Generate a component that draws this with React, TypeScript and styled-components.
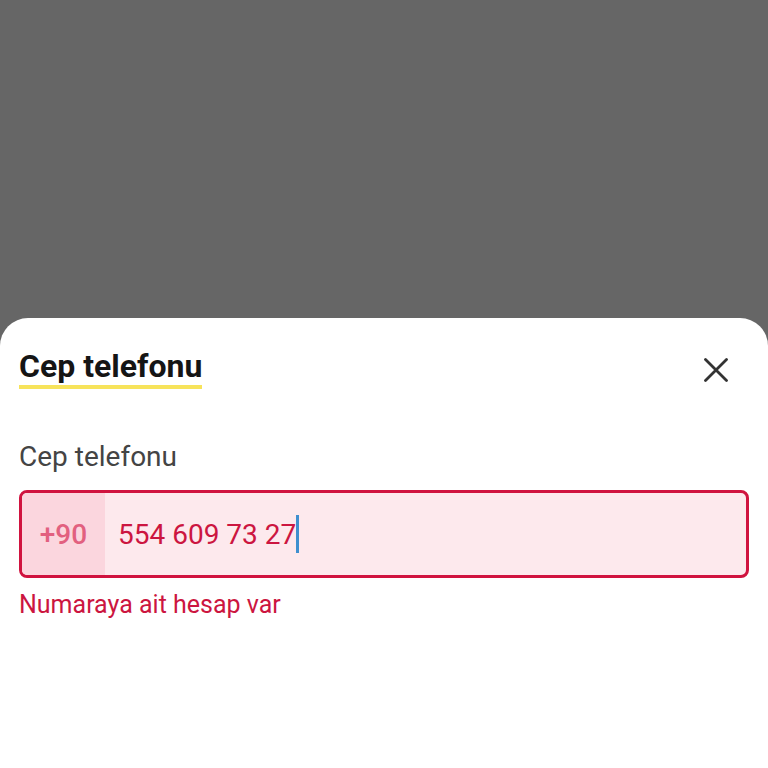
import React from 'react';
import styled, { createGlobalStyle } from 'styled-components';

const GlobalStyle = createGlobalStyle`
  html, body {
    margin: 0;
    padding: 0;
    height: 100%;
    background: #666666;
    font-family: Roboto, "Liberation Sans", Arial, sans-serif;
  }
  #root {
    height: 100%;
  }
`;

const Screen = styled.div`
  display: flex;
  flex-direction: column;
  height: 100vh;
`;

const Backdrop = styled.div`
  flex: 0 0 318px;
  background: #666666;
`;

const Sheet = styled.div`
  flex: 1;
  background: #ffffff;
  border-radius: 28px 28px 0 0;
  padding: 30px 19px 0 19px;
`;

const Header = styled.div`
  display: flex;
  align-items: flex-start;
  justify-content: space-between;
`;

const Title = styled.h1`
  margin: 0;
  font-size: 32px;
  line-height: 37px;
  font-weight: 700;
  color: #151515;
  border-bottom: 4px solid #f7e35a;
`;

const CloseButton = styled.button`
  border: none;
  background: transparent;
  padding: 0;
  margin: 10px 21px 0 0;
  width: 24px;
  height: 24px;
  display: flex;
  cursor: pointer;
`;

const Label = styled.div`
  margin-top: 51px;
  font-size: 28px;
  line-height: 34px;
  color: #444444;
`;

const Field = styled.div`
  margin-top: 16px;
  height: 82px;
  display: flex;
  border: 3px solid #d0133f;
  border-radius: 8px;
  background: #fde9ed;
  overflow: hidden;
`;

const Prefix = styled.div`
  flex: 0 0 83px;
  display: flex;
  align-items: center;
  justify-content: center;
  background: #fbd6de;
  font-size: 28px;
  font-weight: 500;
  color: #e2607f;
`;

const Value = styled.div`
  flex: 1;
  display: flex;
  align-items: center;
  padding-left: 13px;
  font-size: 28px;
  color: #cc1540;
`;

const Caret = styled.span`
  display: inline-block;
  width: 3px;
  height: 38px;
  margin-left: 0;
  background: #3f8fcf;
`;

const ErrorText = styled.div`
  margin-top: 12px;
  font-size: 25px;
  line-height: 30px;
  color: #cc1540;
`;

const CloseIcon = () => (
  <svg width="24" height="24" viewBox="0 0 24 24" fill="none">
    <path d="M1.5 1.5 L22.5 22.5 M22.5 1.5 L1.5 22.5" stroke="#333333" strokeWidth="2.8" strokeLinecap="round" />
  </svg>
);

const App = () => (
  <>
    <GlobalStyle />
    <Screen>
      <Backdrop />
      <Sheet>
        <Header>
          <Title>Cep telefonu</Title>
          <CloseButton aria-label="Kapat">
            <CloseIcon />
          </CloseButton>
        </Header>
        <Label>Cep telefonu</Label>
        <Field>
          <Prefix>+90</Prefix>
          <Value>
            554 609 73 27
            <Caret />
          </Value>
        </Field>
        <ErrorText>Numaraya ait hesap var</ErrorText>
      </Sheet>
    </Screen>
  </>
);

export default App;
